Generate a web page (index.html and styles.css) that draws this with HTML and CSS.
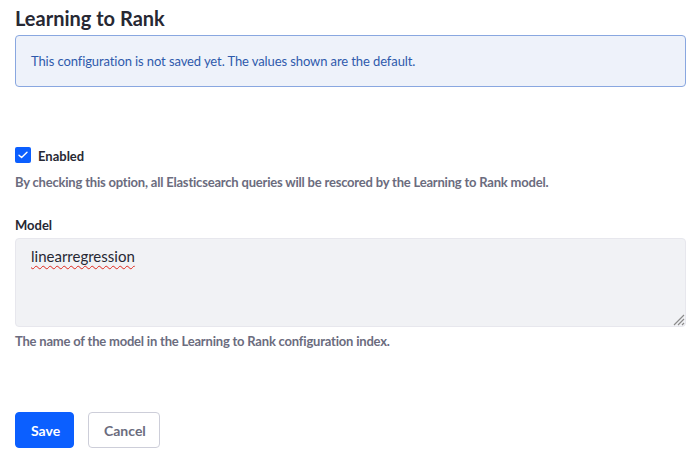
FILE: index.html
```html
<!DOCTYPE html>
<html lang="en">
<head>
<meta charset="utf-8">
<title>Learning to Rank</title>
<link rel="stylesheet" href="styles.css">
</head>
<body>
<div class="page">
  <h1 class="title">Learning to Rank</h1>
  <div class="alert">This configuration is not saved yet. The values shown are the default.</div>

  <div class="form-group check-group">
    <label class="checkbox">
      <span class="box">
        <svg width="10" height="8" viewBox="0 0 10 8"><path d="M1 4.2 L3.6 6.6 L9 1.2" fill="none" stroke="#fff" stroke-width="1.4" stroke-linecap="round" stroke-linejoin="round"/></svg>
      </span>
      <span class="check-label">Enabled</span>
    </label>
    <div class="help">By checking this option, all Elasticsearch queries will be rescored by the Learning to Rank model.</div>
  </div>

  <div class="form-group model-group">
    <div class="label">Model</div>
    <div class="textarea">
      <span class="misspelled">linearregression</span>
      <svg class="grip" width="14" height="14" viewBox="0 0 14 14"><path d="M13 3 L3 13 M13 7 L7 13 M13 11 L11 13" stroke="#8b8b8b" stroke-width="1.2" fill="none"/></svg>
    </div>
    <div class="help">The name of the model in the Learning to Rank configuration index.</div>
  </div>

  <div class="actions">
    <button class="btn btn-primary">Save</button>
    <button class="btn btn-secondary">Cancel</button>
  </div>
</div>
</body>
</html>
```

FILE: styles.css
```css
* { box-sizing: border-box; }
html, body { margin: 0; background: #fff; }
body {
  font-family: "Lato", "Liberation Sans", sans-serif;
  color: #272833;
  font-size: 14px;
}
.page {
  padding: 6px 12px 0 15px;
  display: flex;
  flex-direction: column;
}
.title {
  margin: 0;
  font-size: 20px;
  line-height: 24px;
  font-weight: 700;
  color: #272833;
}
.alert {
  margin-top: 5px;
  border: 1px solid #89a7e0;
  background: #eef2fa;
  color: #2e5aac;
  border-radius: 4px;
  padding: 15px 15px;
  font-size: 13px;
  line-height: 20px;
  letter-spacing: -0.1px;
}
.check-group { margin-top: 59px; }
.checkbox {
  display: flex;
  align-items: center;
  gap: 7px;
  height: 18px;
}
.box {
  width: 16px;
  height: 16px;
  border-radius: 2px;
  background: #0b5fff;
  display: flex;
  align-items: center;
  justify-content: center;
}
.check-label {
  font-weight: 700;
  font-size: 13px;
  padding-top: 1px;
}
.help {
  color: #6b6c7e;
  font-size: 13px;
  font-weight: 700;
  line-height: 20px;
  letter-spacing: -0.2px;
}
.check-group .help { margin-top: 8px; }
.model-group { margin-top: 23px; }
.label {
  font-weight: 700;
  font-size: 13px;
  line-height: 20px;
}
.textarea {
  position: relative;
  margin-top: 3px;
  height: 89px;
  background: #f1f2f5;
  border: 1px solid #e7e7ed;
  border-radius: 4px;
  padding: 5px 15px;
  font-size: 15px;
  line-height: 24px;
  color: #272833;
}
.misspelled {
  text-decoration: underline wavy #e0261b;
  text-decoration-thickness: 1px;
  text-underline-offset: 3px;
}
.grip {
  position: absolute;
  right: 0;
  bottom: 0;
}
.model-group .help { margin-top: 4px; }
.actions {
  margin-top: 61px;
  display: flex;
  gap: 14px;
}
.btn {
  height: 36px;
  border-radius: 4px;
  font-family: inherit;
  font-size: 14px;
  font-weight: 700;
  padding: 0 15px;
  cursor: pointer;
}
.btn-primary {
  background: #0b5fff;
  border: 1px solid #0b5fff;
  color: #fff;
  width: 59px;
}
.btn-secondary {
  background: #fff;
  border: 1px solid #cdced9;
  color: #6b6c7e;
  width: 72px;
}
```
